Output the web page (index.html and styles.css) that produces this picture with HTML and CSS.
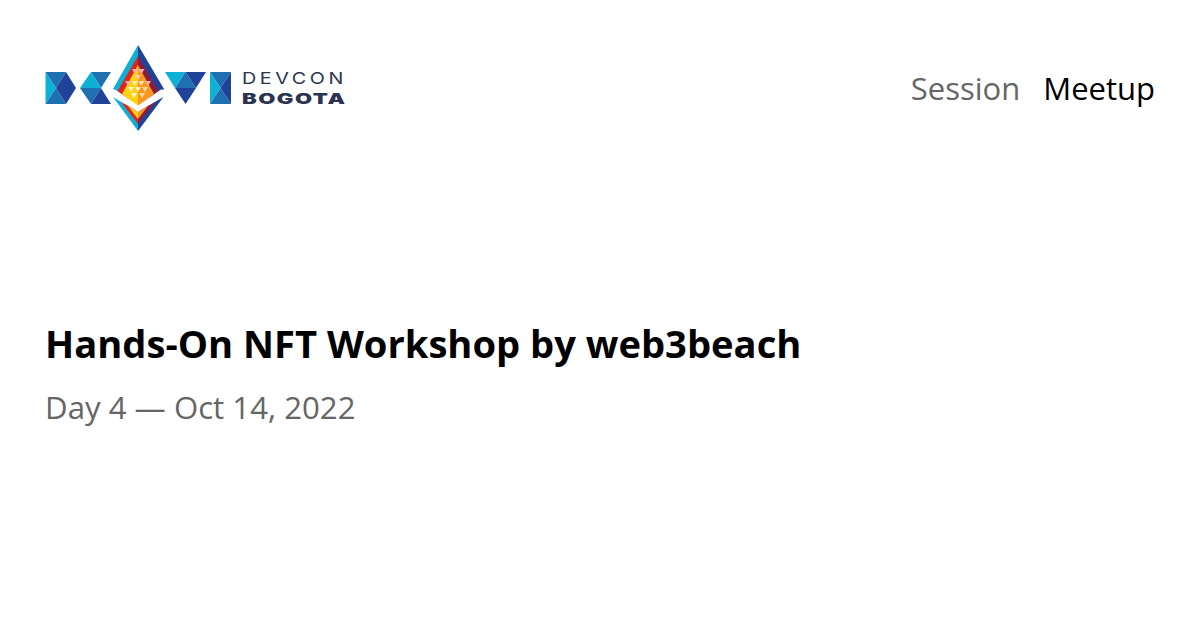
FILE: index.html
```html
<!DOCTYPE html>
<html lang="en">
<head>
<meta charset="utf-8">
<title>Hands-On NFT Workshop by web3beach</title>
<link rel="stylesheet" href="styles.css">
</head>
<body>
<div class="page">
  <header class="header">
    <svg class="logo" viewBox="45 44 300 88" width="300" height="88" aria-label="Devcon Bogota">
      <polygon fill="#0fb0d6" points="45.5,72 56,88 45.5,104"/>
      <polygon fill="#1f70b0" points="45.5,72 66,72 56,88"/>
      <polygon fill="#1f70b0" points="45.5,104 66,104 56,88"/>
      <polygon fill="#20439a" points="56,88 66,72 76,88 66,104"/>

      <polygon fill="#1f70b0" points="91,72 111,72 101,88"/>
      <polygon fill="#0fb0d6" points="91,72 101,88 80,88"/>
      <polygon fill="#1f70b0" points="80,88 101,88 91,104"/>
      <polygon fill="#20439a" points="91,104 111,104 101,88"/>

      <polygon fill="#0fb0d6" points="138,45 113,89 138,107"/>
      <polygon fill="#20439a" points="138,45 164,89 138,107"/>
      <polygon fill="#e2231f" points="138,56 117.500,91 138,107"/>
      <polygon fill="#8d1d3a" points="138,56 158.500,91 138,107"/>
      <polygon fill="#ffd213" points="138,65 122,94 138,107"/>
      <polygon fill="#f8991d" points="138,65 154,94 138,107"/>

      <polygon fill="#f3b1a8" points="132,69 138,69 135,74"/>
      <polygon fill="#f3b1a8" points="138,69 144.500,69 141.250,74"/>
      <polygon fill="#f8c9b0" points="135,75 141,75 138,80"/>
      <polygon fill="#f3b1a8" points="125,81 131,81 128,86"/>
      <polygon fill="#ffe9a8" points="131.500,81 138,81 134.750,86"/>
      <polygon fill="#fbd9a0" points="138,81 144.500,81 141.250,86"/>
      <polygon fill="#f3b1a8" points="145,81 151,81 148,86"/>
      <polygon fill="#fff3c4" points="128,87 134,87 131,92"/>
      <polygon fill="#fff3c4" points="135,87 141,87 138,92"/>
      <polygon fill="#fbd9a0" points="142,87 148,87 145,92"/>
      <polygon fill="#fff3c4" points="131,93 137,93 134,98"/>
      <polygon fill="#fbd9a0" points="139,93 145,93 142,98"/>

      <polygon fill="#0fb0d6" points="113,97 138,131 138,122 122,102.500"/>
      <polygon fill="#20439a" points="163.500,97 138,131 138,122 154,102.500"/>
      <polygon fill="#e2231f" points="121,102 138,124 138,111"/>
      <polygon fill="#8d1d3a" points="155,102 138,124 138,111"/>
      <polygon fill="#ffd213" points="128,106 138,119 138,112"/>
      <polygon fill="#f8991d" points="148,106 138,119 138,112"/>

      <polygon fill="#fff" points="112.500,90 115,89.500 138,105.500 161,89.500 164.500,90 164.500,95 138,112 112.500,95"/>

      <polygon fill="#0fb0d6" points="165,72 185.500,72 175,88"/>
      <polygon fill="#1f70b0" points="185.500,72 175,88 196,88"/>
      <polygon fill="#20439a" points="185.500,72 206,72 196,88"/>
      <polygon fill="#20439a" points="175,88 196,88 185.500,104"/>

      <polygon fill="#1f70b0" points="210,72 231,72 220.500,88"/>
      <polygon fill="#0fb0d6" points="210,72 220.500,88 210,104"/>
      <polygon fill="#1f70b0" points="210,104 231,104 220.500,88"/>
      <polygon fill="#20439a" points="231,72 220.500,88 231,104"/>

      <text class="logo-top" x="242" y="84" textLength="105" lengthAdjust="spacingAndGlyphs">DEVCON</text>
      <text class="logo-bottom" x="242" y="103.500" textLength="104.500" lengthAdjust="spacingAndGlyphs">BOGOTA</text>
    </svg>
    <nav class="nav">
      <span class="nav-item">Session</span>
      <span class="nav-item active">Meetup</span>
    </nav>
  </header>
  <main class="main">
    <h1 class="title">Hands-On NFT Workshop by web3beach</h1>
    <p class="date">Day 4 — Oct 14, 2022</p>
  </main>
</div>
</body>
</html>
```
FILE: styles.css
```css
html, body {
  margin: 0;
  padding: 0;
  background: #fff;
}
.page {
  width: 1200px;
  height: 630px;
  box-sizing: border-box;
  padding: 44px 45px 0;
  font-family: "Open Sans", sans-serif;
  overflow: hidden;
}
.header {
  display: flex;
  justify-content: space-between;
  align-items: center;
}
.logo {
  display: block;
}
.logo-top {
  font-family: Inter, sans-serif;
  font-size: 16.5px;
  font-weight: 400;
  letter-spacing: 3px;
  fill: #2b3350;
}
.logo-bottom {
  font-family: Inter, sans-serif;
  font-size: 15px;
  font-weight: 900;
  letter-spacing: 1px;
  fill: #2b3350;
}
.nav {
  display: flex;
  gap: 23px;
  font-size: 31px;
  line-height: 42px;
  color: #666;
}
.active {
  color: #000;
}
.main {
  margin-top: 182px;
}
.title {
  margin: 0;
  font-size: 38.15px;
  line-height: 58px;
  font-weight: 700;
  color: #000;
}
.date {
  margin: 15px 0 0;
  font-size: 31.2px;
  line-height: 40px;
  color: #666;
}
```
